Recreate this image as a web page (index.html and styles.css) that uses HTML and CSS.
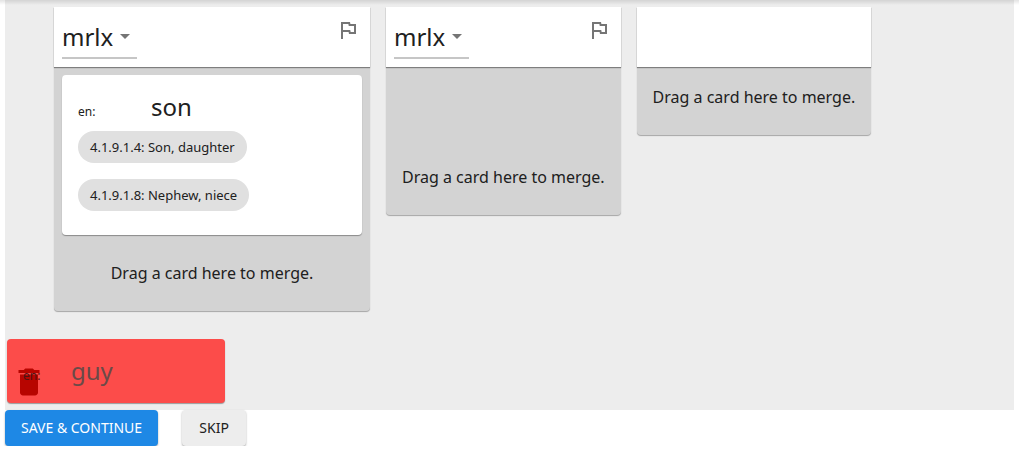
FILE: index.html
```html
<!DOCTYPE html>
<html lang="en">
<head>
<meta charset="utf-8">
<meta name="viewport" content="width=device-width, initial-scale=1">
<title>Merge duplicates</title>
<link rel="stylesheet" href="styles.css">
</head>
<body>
<div class="bar-shadow"></div>
<main class="page">
  <div class="board">
    <div class="columns">
      <section class="column column-wide">
        <header class="column-head">
          <div class="picker">
            <select class="picker-select" aria-label="Vernacular of word 1"><option>mrlx</option></select>
            <svg class="picker-arrow" viewBox="0 0 24 24" aria-hidden="true"><path d="M7 10l5 5 5-5z"/></svg>
          </div>
          <button class="flag" type="button" aria-label="Flag word 1"><svg viewBox="0 0 24 24"><path d="M12.36 6l.4 2H18v6h-3.36l-.4-2H7V6h5.36M14 4H5v17h2v-7h5.6l.4 2h7V6h-5.6L14 4z"/></svg></button>
        </header>
        <div class="column-body">
          <article class="card">
            <div class="gloss"><span class="lang">en:</span><span class="word">son</span></div>
            <ul class="chips">
              <li class="chip">4.1.9.1.4: Son, daughter</li>
              <li class="chip">4.1.9.1.8: Nephew, niece</li>
            </ul>
          </article>
          <p class="hint">Drag a card here to merge.</p>
        </div>
      </section>
      <section class="column">
        <header class="column-head">
          <div class="picker">
            <select class="picker-select" aria-label="Vernacular of word 2"><option>mrlx</option></select>
            <svg class="picker-arrow" viewBox="0 0 24 24" aria-hidden="true"><path d="M7 10l5 5 5-5z"/></svg>
          </div>
          <button class="flag" type="button" aria-label="Flag word 2"><svg viewBox="0 0 24 24"><path d="M12.36 6l.4 2H18v6h-3.36l-.4-2H7V6h5.36M14 4H5v17h2v-7h5.6l.4 2h7V6h-5.6L14 4z"/></svg></button>
        </header>
        <div class="column-body column-body-open">
          <p class="hint">Drag a card here to merge.</p>
        </div>
      </section>
      <section class="column">
        <header class="column-head"></header>
        <div class="column-body">
          <p class="hint">Drag a card here to merge.</p>
        </div>
      </section>
    </div>
    <article class="card card-trash">
      <svg class="trash" viewBox="0 0 24 24" aria-hidden="true"><path d="M6 19c0 1.1.9 2 2 2h8c1.1 0 2-.9 2-2V7H6v12zM19 4h-3.5l-1-1h-5l-1 1H5v2h14V4z"/></svg>
      <div class="gloss"><span class="lang">en:</span><span class="word">guy</span></div>
    </article>
  </div>
  <div class="actions">
    <button class="btn btn-primary" type="button">SAVE &amp; CONTINUE</button>
    <button class="btn" type="button">SKIP</button>
  </div>
</main>
</body>
</html>
```
FILE: styles.css
```css
* { box-sizing: border-box; }
body {
  margin: 0;
  background: #fff;
  color: #202020;
  font-family: "Noto Sans", sans-serif;
  font-size: 16px;
  line-height: 24px;
}
.bar-shadow {
  position: absolute;
  inset: 0 0 auto;
  height: 5px;
  background: linear-gradient(rgba(0, 0, 0, .11), rgba(0, 0, 0, 0));
}
.page { padding: 0 5px; }
.board {
  background: #ededed;
  padding: 7px 2px;
}
.columns {
  display: flex;
  align-items: flex-start;
  gap: 16px;
  margin: 0 47px 28px;
}
.column {
  border-radius: 0 0 4px 4px;
  background: #d3d3d3;
  box-shadow: 0 1px 1px rgba(0, 0, 0, .3);
}
.column-wide { width: 316px; }
.column-head {
  display: flex;
  justify-content: space-between;
  align-items: flex-start;
  height: 60px;
  padding: 8px;
  background: #fff;
  box-shadow: 0 1px 1px rgba(0, 0, 0, .4);
}
.picker {
  display: grid;
  align-items: center;
  border-bottom: 2px solid #c6c6c6;
}
.picker-select, .picker-arrow { grid-area: 1 / 1; }
.picker-select {
  appearance: none;
  width: 75px;
  height: 42px;
  padding: 0 24px 0 0;
  border: 0;
  background: none;
  color: #202020;
  font: 24px "Noto Sans", sans-serif;
}
.picker-arrow {
  justify-self: end;
  width: 24px;
  height: 24px;
  fill: #757575;
  pointer-events: none;
}
.flag {
  padding: 3px 2px;
  border: 0;
  background: none;
}
.flag svg {
  display: block;
  width: 24px;
  height: 24px;
  fill: #757575;
}
.column-body { padding: 8px; }
.column-body-open { padding-top: 88px; }
.hint {
  margin: 0;
  padding: 10px 8px 18px;
  text-align: center;
}
.card {
  padding: 16px;
  border-radius: 4px;
  background: #fff;
  box-shadow: 0 1px 1px rgba(0, 0, 0, .35);
}
.column .card { padding-bottom: 24px; margin-bottom: 16px; }
.gloss {
  display: grid;
  grid-template-columns: 73px 1fr;
  align-items: baseline;
  line-height: 32px;
}
.lang { font-size: 12px; line-height: 16px; }
.word { font-size: 24px; }
.chips {
  display: flex;
  flex-direction: column;
  align-items: flex-start;
  gap: 16px;
  margin: 8px 0 0;
  padding: 0;
  list-style: none;
}
.chip {
  padding: 0 12px;
  border-radius: 16px;
  background: #e0e0e0;
  font-size: 13px;
  line-height: 32px;
}
.card-trash {
  position: relative;
  width: 218px;
  background: #fc4c4a;
}
.card-trash .gloss {
  position: relative;
  grid-template-columns: 48px 1fr;
}
.card-trash .lang { color: #4d1414; }
.card-trash .word { color: #6b4a48; }
.trash {
  position: absolute;
  left: 4px;
  bottom: 3px;
  width: 36px;
  height: 36px;
  fill: #b70500;
}
.actions { display: flex; gap: 24px; }
.btn {
  min-width: 64px;
  padding: 6px 16px;
  border: 0;
  border-radius: 4px;
  background: #ededed;
  color: #202020;
  font: 14px/24px "Noto Sans", sans-serif;
  box-shadow: 0 1px 2px rgba(0, 0, 0, .35);
}
.btn-primary { background: #1e88e5; color: #fff; }
```
